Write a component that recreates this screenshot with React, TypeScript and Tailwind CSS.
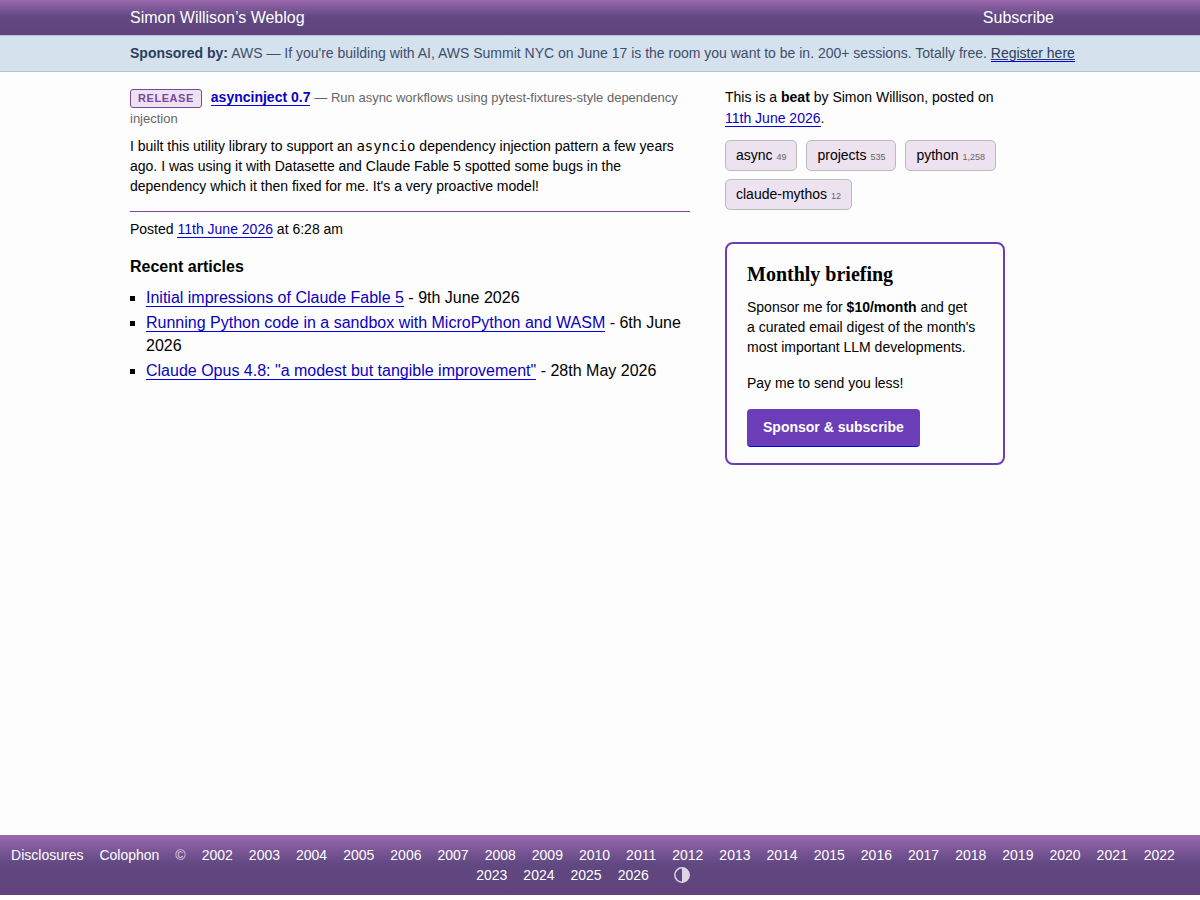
import type { ReactNode } from "react";

const years = Array.from({ length: 25 }, (_, i) => 2002 + i);

const tags = [
  { name: "async", count: "49" },
  { name: "projects", count: "535" },
  { name: "python", count: "1,258" },
  { name: "claude-mythos", count: "12" },
];

const articles = [
  { title: "Initial impressions of Claude Fable 5", date: "9th June 2026" },
  { title: "Running Python code in a sandbox with MicroPython and WASM", date: "6th June 2026" },
  { title: "Claude Opus 4.8: \"a modest but tangible improvement\"", date: "28th May 2026" },
];

function TextLink({ children }: { children: ReactNode }) {
  return (
    <a href="#" className="border-b border-[#0000ee] text-[#0b00c0]">
      {children}
    </a>
  );
}

function Header() {
  return (
    <header className="bg-[linear-gradient(to_bottom,#9a67af_0%,#604881_49%,#61437d_100%)] text-white">
      <div className="mx-auto flex max-w-[940px] items-center justify-between pr-4 text-[16px] leading-[35px]">
        <a href="#">Simon Willison’s Weblog</a>
        <a href="#">Subscribe</a>
      </div>
    </header>
  );
}

function SponsorBanner() {
  return (
    <div className="border-y border-[#b0c4de] bg-[#d5e1ec] text-[14px] leading-[35px] text-[#3d4f6f]">
      <div className="mx-auto max-w-[940px] lg:whitespace-nowrap">
        <strong className="text-[#2a3f5f]">Sponsored by:</strong> AWS — If you're building with AI, AWS Summit NYC on
        June 17 is the room you want to be in. 200+ sessions. Totally free.{" "}
        <a href="#" className="border-b border-[#0000ee] text-[#2a3f5f] underline">
          Register here
        </a>
      </div>
    </div>
  );
}

function Entry() {
  return (
    <article className="text-[14px] leading-5">
      <p>
        <span className="mr-[9px] inline-block rounded-[3px] border border-[#7b46a3] bg-[#ede2f0] px-[7px] align-middle text-[11px] leading-[17px] font-bold tracking-wider text-[#7b46a3] uppercase">
          Release
        </span>
        <strong>
          <TextLink>asyncinject 0.7</TextLink>
        </strong>{" "}
        <span className="text-[13px] leading-none text-[#666666]">
          — Run async workflows using pytest-fixtures-style dependency injection
        </span>
      </p>
      <p className="mt-2">
        I built this utility library to support an{" "}
        <code className="font-['DejaVu_Sans_Mono',monospace] leading-none">asyncio</code> dependency injection pattern
        a few years ago. I was using it with Datasette and Claude Fable 5 spotted some bugs in the dependency which it
        then fixed for me. It's a very proactive model!
      </p>
      <p className="mt-[15px] border-t border-[#7b46a3] pt-[7px]">
        Posted <TextLink>11th June 2026</TextLink> at 6:28 am
      </p>
    </article>
  );
}

function RecentArticles() {
  return (
    <section className="mt-4 text-[16px] leading-[23px]">
      <h3 className="font-bold">Recent articles</h3>
      <ul className="mt-2 flex flex-col gap-[2px]">
        {articles.map((article) => (
          <li key={article.title} className="flex">
            <span aria-hidden="true" className="mt-[10px] mr-[11px] size-[5px] shrink-0 bg-black" />
            <div>
              <TextLink>{article.title}</TextLink> - {article.date}
            </div>
          </li>
        ))}
      </ul>
    </section>
  );
}

function Sidebar() {
  return (
    <aside className="w-full text-[14px] md:w-[280px]">
      <p className="leading-[21px]">
        This is a <strong>beat</strong> by Simon Willison, posted on <TextLink>11th June 2026</TextLink>.
      </p>
      <div className="mt-[11px] flex flex-wrap gap-x-[9px] gap-y-2">
        {tags.map((tag) => (
          <a
            key={tag.name}
            href="#"
            className="rounded-[5px] border border-[#bbbbbb] bg-[#ede2f0] px-[10px] leading-[29px]"
          >
            {tag.name} <span className="text-[9px] leading-none text-[#666666]">{tag.count}</span>
          </a>
        ))}
      </div>
      <section className="mt-8 rounded-lg border-2 border-[#6b3db8] px-5 pt-[18px] pb-4 leading-5">
        <h2 className="font-['Liberation_Serif',serif] text-[20px] leading-6 font-bold">Monthly briefing</h2>
        <p className="mt-[11px]">
          Sponsor me for <strong>$10/month</strong> and get a&nbsp;curated email digest of the month's most important
          LLM developments.
        </p>
        <p className="mt-4">Pay me to send you less!</p>
        <a
          href="#"
          className="mt-4 inline-block rounded-[4px] border-b border-[#0000ee] bg-[#6b3db8] px-4 py-2 leading-[21px] font-bold text-white"
        >
          Sponsor &amp; subscribe
        </a>
      </section>
    </aside>
  );
}

function Footer() {
  return (
    <footer className="mb-[5px] bg-[linear-gradient(to_bottom,#9a67af_0%,#604881_49%,#61437d_100%)] py-[10px] text-[14px] leading-5 text-white">
      <ul className="flex flex-wrap justify-center gap-x-4 pr-[14px]">
        <li>
          <a href="#">Disclosures</a>
        </li>
        <li>
          <a href="#">Colophon</a>
        </li>
        <li className="text-[#e0d8e6]">©</li>
        {years.map((year) => (
          <li key={year}>
            <a href="#">{year}</a>
          </li>
        ))}
        <li className="mr-5 ml-[9px] flex items-center">
          <button type="button" aria-label="Toggle theme" className="text-[#ded6e5]">
            <svg viewBox="0 0 16 16" className="block size-4">
              <circle cx="8" cy="8" r="7.2" fill="none" stroke="currentColor" strokeWidth="1.5" />
              <path d="M8 .7a7.3 7.3 0 0 1 0 14.6z" fill="currentColor" />
            </svg>
          </button>
        </li>
      </ul>
    </footer>
  );
}

export default function App() {
  return (
    <div className="flex min-h-screen flex-col bg-white font-['Liberation_Sans',Arial,sans-serif] text-black">
      <Header />
      <SponsorBanner />
      <div className="flex-1 bg-[#fdfdfd]">
        <div className="mx-auto flex max-w-[940px] flex-col gap-[35px] pt-[15px] md:flex-row">
          <main className="w-full md:w-[560px]">
            <Entry />
            <RecentArticles />
          </main>
          <Sidebar />
        </div>
      </div>
      <Footer />
    </div>
  );
}
